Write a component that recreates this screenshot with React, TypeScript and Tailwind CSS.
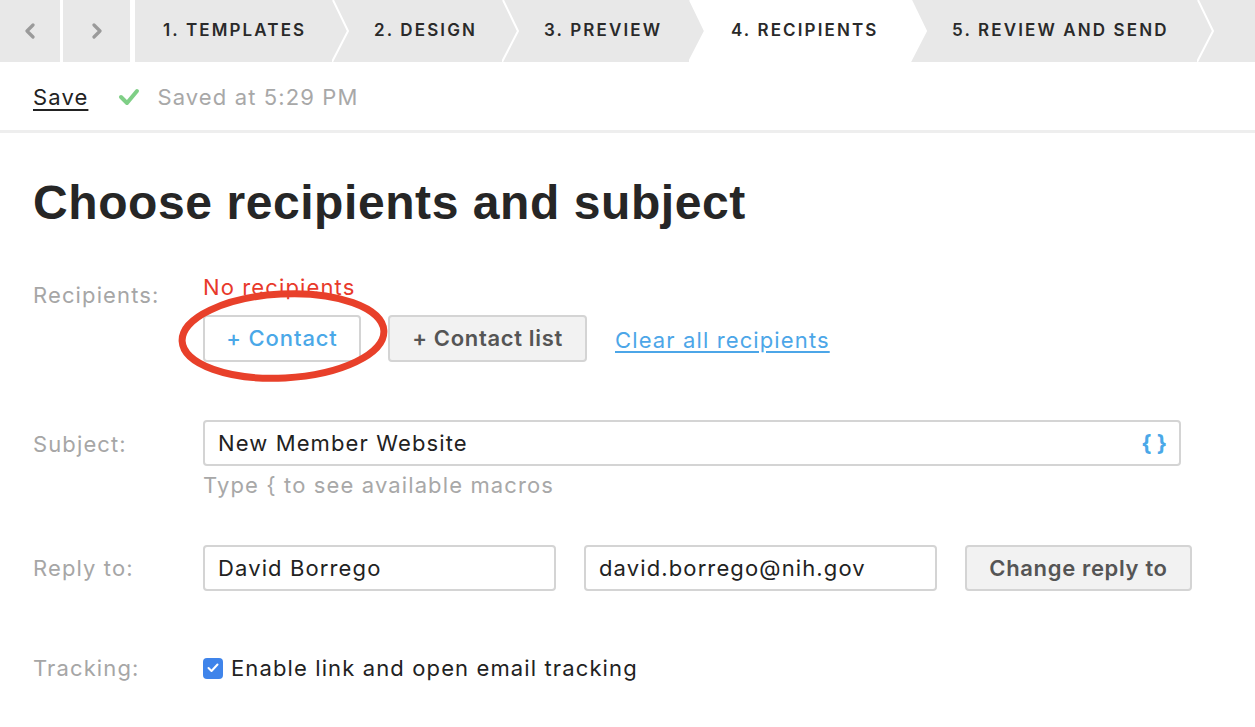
import React from 'react';

const STEPS = [
  { label: '1. TEMPLATES', w: 'w-[197px]', active: false },
  { label: '2. DESIGN', w: 'w-[153px]', active: false },
  { label: '3. PREVIEW', w: 'w-[170px]', active: false },
  { label: '4. RECIPIENTS', w: 'w-[204px]', active: true },
  { label: '5. REVIEW AND SEND', w: 'w-[270px]', active: false },
];

// chevron divider between two steps; fills the active side white
const Divider = ({ leftActive, rightActive }: { leftActive: boolean; rightActive: boolean }) => (
  <svg width="17" height="62" viewBox="0 0 17 62" className="shrink-0 block">
    <rect x="0" y="0" width="17" height="62" fill="#e8e8e8" />
    {leftActive && <polygon points="0,0 1,0 16,31 0,62" fill="#ffffff" />}
    {rightActive && <polygon points="1,0 17,0 17,62 0,62 16,31" fill="#ffffff" />}
    <polyline points="1,0 16,31 0,62" fill="none" stroke="#ffffff" strokeWidth="2" />
  </svg>
);

const Chevron = ({ dir }: { dir: 'left' | 'right' }) => (
  <svg width="12" height="16" viewBox="0 0 12 16">
    <polyline
      points={dir === 'left' ? '9,2 3,8 9,14' : '3,2 9,8 3,14'}
      fill="none"
      stroke="#9a9a9a"
      strokeWidth="3.2"
      strokeLinecap="round"
      strokeLinejoin="round"
    />
  </svg>
);

export default function App() {
  return (
    <div className="w-[1255px] h-[727px] overflow-hidden bg-white text-[#222] font-['Inter',sans-serif] tracking-[0.07em]">
      {/* wizard nav */}
      <div className="flex h-[62px] bg-white tracking-normal">
        <div className="w-[60px] bg-[#e8e8e8] flex items-center justify-center">
          <Chevron dir="left" />
        </div>
        <div className="w-[67px] ml-[3px] bg-[#e8e8e8] flex items-center justify-center">
          <Chevron dir="right" />
        </div>
        <div className="ml-[5px] flex flex-1 bg-[#e8e8e8]">
          {STEPS.map((s, i) => (
            <React.Fragment key={s.label}>
              <div
                className={`${s.w} shrink-0 flex items-center ${i === 0 ? 'pl-[28px]' : 'pl-[25px]'} ${s.active ? 'bg-white' : 'bg-[#e8e8e8]'}`}
              >
                <span className="text-[17px] font-semibold tracking-[0.125em] text-[#2a2a2a] whitespace-nowrap">
                  {s.label}
                </span>
              </div>
              <Divider leftActive={s.active} rightActive={!!STEPS[i + 1]?.active} />
            </React.Fragment>
          ))}
          <div className="flex-1 bg-[#e8e8e8]" />
        </div>
      </div>

      {/* save bar */}
      <div className="h-[71px] flex items-center pl-[33px] pt-[2px] border-b-[3px] border-[#eeeeee]">
        <span className="text-[22px] underline underline-offset-[4px] decoration-[2px] text-[#222]">Save</span>
        <svg width="22" height="18" viewBox="0 0 22 18" className="ml-[30px]">
          <polyline points="3,9 9,15 19,3" fill="none" stroke="#7fcf86" strokeWidth="4" strokeLinecap="round" strokeLinejoin="round" />
        </svg>
        <span className="ml-[17px] text-[22px] text-[#a8a8a8]">Saved at 5:29 PM</span>
      </div>

      <div className="pl-[33px]">
        <h1 className="mt-[41px] text-[48px] leading-[58px] font-bold tracking-[0.012em] text-[#262626] font-['Liberation_Sans',sans-serif]">
          Choose recipients and subject
        </h1>

        {/* recipients */}
        <div className="mt-[42px] flex">
          <div className="w-[170px] pt-[8px] text-[22px] leading-[26px] text-[#a6a6a6]">Recipients:</div>
          <div>
            <div className="text-[22px] leading-[26px] text-[#e8392b]">No recipients</div>
            <div className="relative mt-[15px] flex items-center">
              <button className="h-[47px] w-[158px] rounded-[4px] border-2 border-[#d4d4d4] bg-white text-[22px] font-medium text-[#4aa8e8] tracking-[0.04em]">
                + Contact
              </button>
              <button className="ml-[27px] h-[47px] w-[199px] rounded-[4px] border-2 border-[#d4d4d4] bg-[#f2f2f2] text-[22px] font-semibold text-[#555] tracking-[0.03em]">
                + Contact list
              </button>
              <a className="ml-[28px] mt-[4px] text-[22px] text-[#4ca6e8] underline underline-offset-[3px]">Clear all recipients</a>
              <svg
                width="216"
                height="96"
                viewBox="0 0 216 96"
                className="absolute left-[-25px] top-[-26px] pointer-events-none"
              >
                <ellipse cx="105" cy="47" rx="101" ry="42" fill="none" stroke="#e8402a" strokeWidth="7" transform="rotate(-3 105 47)" />
              </svg>
            </div>
          </div>
        </div>

        {/* subject */}
        <div className="mt-[58px] flex">
          <div className="w-[170px] pt-[11px] text-[22px] leading-[26px] text-[#a6a6a6]">Subject:</div>
          <div>
            <div className="h-[46px] w-[978px] rounded-[4px] border-2 border-[#d4d4d4] flex items-center justify-between pl-[13px] pr-[12px]">
              <span className="text-[22px] text-[#222]">New Member Website</span>
              <span className="text-[22px] font-bold text-[#4aa8e8] tracking-normal">{'{ }'}</span>
            </div>
            <div className="mt-[6px] text-[22px] leading-[26px] text-[#a8a8a8]">Type {'{'} to see available macros</div>
          </div>
        </div>

        {/* reply to */}
        <div className="mt-[47px] flex items-center">
          <div className="w-[170px] text-[22px] leading-[26px] text-[#a6a6a6]">Reply to:</div>
          <div className="h-[46px] w-[353px] rounded-[4px] border-2 border-[#d4d4d4] flex items-center pl-[13px] text-[22px]">
            David Borrego
          </div>
          <div className="ml-[28px] h-[46px] w-[353px] rounded-[4px] border-2 border-[#d4d4d4] flex items-center pl-[13px] text-[22px]">
            david.borrego@nih.gov
          </div>
          <button className="ml-[28px] h-[46px] w-[227px] rounded-[4px] border-2 border-[#d4d4d4] bg-[#f2f2f2] text-[22px] font-semibold text-[#555] tracking-[0.03em]">
            Change reply to
          </button>
        </div>

        {/* tracking */}
        <div className="mt-[64px] flex items-center">
          <div className="w-[170px] text-[22px] leading-[26px] text-[#a6a6a6]">Tracking:</div>
          <span className="w-[20px] h-[21px] rounded-[4px] bg-[#3f84ea] flex items-center justify-center">
            <svg width="12" height="10" viewBox="0 0 12 10">
              <polyline points="1.5,5 4.5,8 10.5,1.5" fill="none" stroke="#fff" strokeWidth="2" strokeLinecap="round" strokeLinejoin="round" />
            </svg>
          </span>
          <span className="ml-[8px] text-[22px] leading-[26px] text-[#222]">Enable link and open email tracking</span>
        </div>
      </div>
    </div>
  );
}
